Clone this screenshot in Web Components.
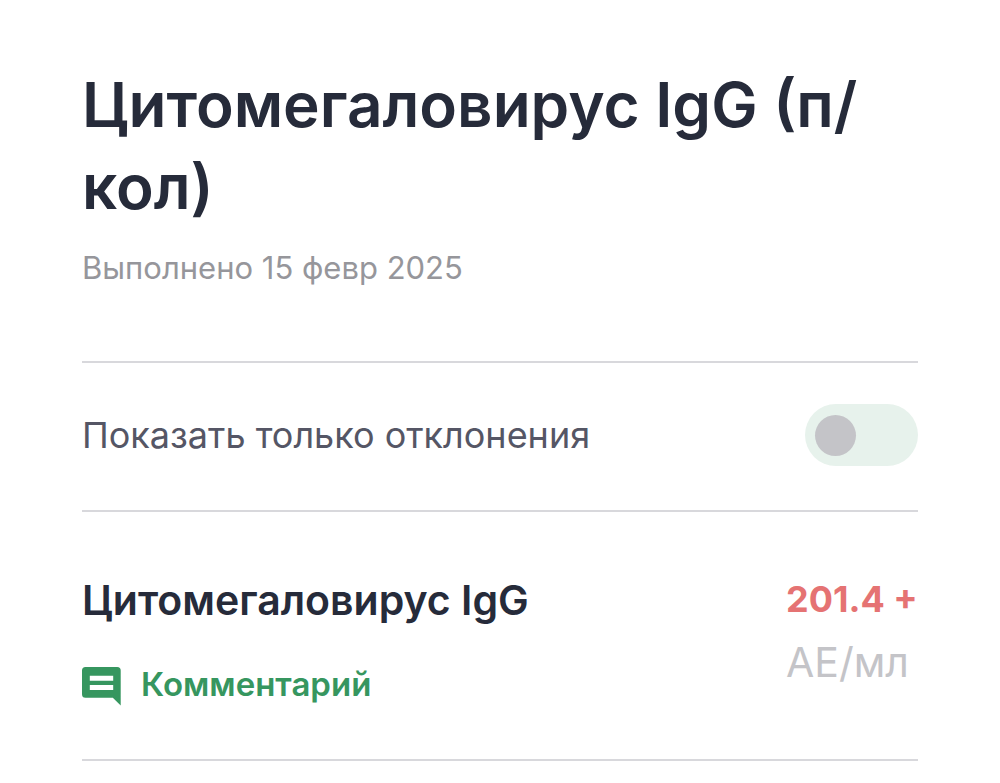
<!DOCTYPE html>
<html lang="ru">
<head>
<meta charset="utf-8">
<meta name="viewport" content="width=device-width, initial-scale=1">
<title>Цитомегаловирус IgG</title>
<style>
    body {
        margin: 0;
        background: #fff;
        color: #262b3a;
        font-family: Inter, "Noto Sans", sans-serif;
    }
</style>
</head>
<body>
<analysis-page>
    <analysis-header slot="header">
        Цитомегаловирус IgG (п/кол)
        <span slot="date">Выполнено 15 февр 2025</span>
    </analysis-header>
    <toggle-row slot="filter">Показать только отклонения</toggle-row>
    <result-row value="201.4 +" unit="АЕ/мл">
        Цитомегаловирус IgG
        <comment-button slot="action">Комментарий</comment-button>
    </result-row>
</analysis-page>

<script>
class BaseElement extends HTMLElement {
    constructor()
    {
        super();

        this.attachShadow({mode: "open"});
        const template = document.createElement("template");
        template.innerHTML = this.constructor.markup;
        this.shadowRoot.append(template.content.cloneNode(true));
    }
}

class AnalysisPage extends BaseElement {}

AnalysisPage.markup = `
    <style>
        :host {
            display: block;
            padding: 64px 82px 0;
            --divider: 2px solid #d8d8dc;
        }
    </style>

    <main>
        <slot name="header"></slot>
        <slot name="filter"></slot>
        <slot></slot>
    </main>
`;

class AnalysisHeader extends BaseElement {}

AnalysisHeader.markup = `
    <style>
        :host {
            display: block;
            padding-bottom: 73px;
        }

        h1 {
            margin: 0;
            font-size: 62px;
            line-height: 82px;
            font-weight: 600;
        }

        p {
            margin: 20px 0 0;
            font-size: 31px;
            line-height: 40px;
            color: #96969b;
        }
    </style>

    <h1><slot></slot></h1>
    <p><slot name="date"></slot></p>
`;

class ToggleRow extends BaseElement {
    get checked() { return this.shadowRoot.querySelector("input").checked; }
    set checked(value) { this.shadowRoot.querySelector("input").checked = value; }
}

ToggleRow.markup = `
    <style>
        :host {
            display: block;
            border-top: var(--divider);
            border-bottom: var(--divider);
        }

        label {
            display: flex;
            align-items: center;
            justify-content: space-between;
            gap: 24px;
            padding: 41px 0 44px;
            font-size: 36px;
            line-height: 48px;
            color: #555665;
            cursor: pointer;
        }

        input {
            appearance: none;
            display: flex;
            align-items: center;
            flex: none;
            box-sizing: border-box;
            width: 113px;
            height: 62px;
            margin: 0;
            padding: 0 10px;
            border-radius: 31px;
            background: #e7f2ec;
            cursor: pointer;
        }

        input::before {
            content: "";
            width: 41px;
            height: 41px;
            border-radius: 50%;
            background: #c4c4c8;
        }

        input:checked {
            justify-content: flex-end;
        }

        input:checked::before {
            background: #36965f;
        }
    </style>

    <label for="toggle">
        <span><slot></slot></span>
        <input id="toggle" type="checkbox" role="switch">
    </label>
`;

class ResultRow extends BaseElement {
    attributeChangedCallback(name, oldValue, newValue)
    {
        this.shadowRoot.querySelector("." + name).textContent = newValue;
    }
}

ResultRow.observedAttributes = ["value", "unit"];

ResultRow.markup = `
    <style>
        :host {
            display: flex;
            justify-content: space-between;
            gap: 24px;
            padding: 61px 0 51px;
            border-bottom: var(--divider);
        }

        h2 {
            margin: 0 0 33px;
            font-size: 41px;
            line-height: 54px;
            font-weight: 600;
        }

        .result {
            width: 132px;
            flex: none;
            white-space: nowrap;
        }

        .value {
            font-size: 36px;
            line-height: 52px;
            font-weight: 700;
            color: #e57373;
        }

        .unit {
            margin-top: 10px;
            font-size: 41px;
            line-height: 54px;
            color: #c4c4c8;
        }
    </style>

    <div>
        <h2><slot></slot></h2>
        <slot name="action"></slot>
    </div>
    <div class="result">
        <div class="value"></div>
        <div class="unit"></div>
    </div>
`;

class CommentButton extends BaseElement {}

CommentButton.markup = `
    <style>
        :host {
            display: block;
        }

        button {
            display: flex;
            align-items: center;
            gap: 20px;
            padding: 0;
            border: none;
            background: none;
            font: inherit;
            font-size: 33px;
            line-height: 48px;
            font-weight: 600;
            color: #36965f;
            cursor: pointer;
        }

        svg {
            margin-top: 4px;
        }
    </style>

    <button type="button">
        <svg width="39" height="39" viewBox="0 0 39 39" aria-hidden="true">
            <path fill="currentColor" fill-rule="evenodd" d="M3.5 0H35.2Q38.7 0 38.7 3.5V38.5L30.8 30.7H3.5Q0 30.7 0 27.2V3.5Q0 0 3.5 0ZM7.8 8.8V13.8H31.2V8.8ZM7.8 18V23H31.2V18Z"/>
        </svg>
        <span><slot></slot></span>
    </button>
`;

window.customElements.define("analysis-page", AnalysisPage);
window.customElements.define("analysis-header", AnalysisHeader);
window.customElements.define("toggle-row", ToggleRow);
window.customElements.define("result-row", ResultRow);
window.customElements.define("comment-button", CommentButton);
</script>
</body>
</html>
